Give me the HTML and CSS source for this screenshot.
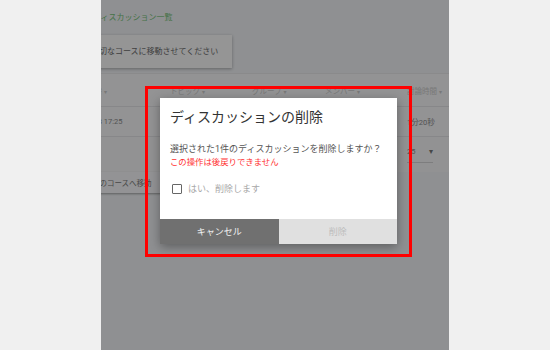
FILE: index.html
```html
<!DOCTYPE html>
<html>
<head>
	<meta charset="utf-8">
	<title>ディスカッション一覧</title>
	<link rel="stylesheet" href="styles.css">
</head>
<body>
	<div class="app">
		<div class="content">
			<h1 class="page-title">ディスカッション一覧</h1>
			<div class="notice">適切なコースに移動させてください</div>
			<div class="table">
				<div class="row head">
					<span>開始日時 <i class="caret">▾</i></span>
					<span>トピック <i class="caret">▾</i></span>
					<span>グループ <i class="caret">▾</i></span>
					<span>メンバー <i class="caret">▾</i></span>
					<span>討論時間 <i class="caret">▾</i></span>
				</div>
				<div class="row">
					<span>2018/06/08 17:25</span>
					<span>自己紹介</span>
					<span>グループA</span>
					<span>3名</span>
					<span>1分20秒</span>
				</div>
			</div>
			<div class="pager">
				<span class="pager-label">表示件数</span>
				<span class="select">25 <i class="caret">▾</i></span>
			</div>
			<button class="move">別のコースへ移動</button>
		</div>

		<div class="backdrop">
			<div class="dialog">
				<h2 class="dialog-title">ディスカッションの削除</h2>
				<div class="dialog-body">
					<p class="question">選択された1件のディスカッションを削除しますか？</p>
					<p class="warning">この操作は後戻りできません</p>
					<label class="confirm"><span class="box"></span>はい、削除します</label>
				</div>
				<div class="actions">
					<button class="btn cancel">キャンセル</button>
					<button class="btn delete" disabled>削除</button>
				</div>
			</div>
		</div>
	</div>
	<div class="annotation"></div>
</body>
</html>
```

FILE: styles.css
```css
body {
	margin: 0;
	background-color: #f0f0f0;
	font-family: "Roboto", "Noto Sans CJK JP", sans-serif;
}

.app {
	position: relative;
	width: 348px;
	height: 350px;
	margin: 0 auto;
	overflow: hidden;
	background-color: #eef0f3;
}

.content {
	margin-left: -61px;
	width: 409px;
}

.page-title {
	margin: 0;
	height: 35px;
	padding-left: 53px;
	line-height: 36px;
	font-size: 8px;
	font-weight: normal;
	color: #72bf76;
	box-sizing: border-box;
}

.notice {
	margin-left: 40px;
	width: 152px;
	height: 33px;
	padding-left: 11px;
	line-height: 33px;
	font-size: 8px;
	color: #6a6a6a;
	background-color: #f8f8f9;
	box-shadow: 0 1px 3px rgba(0, 0, 0, 0.3);
	box-sizing: border-box;
}

.table {
	margin-top: 5px;
	background-color: #f5f5f7;
}

.row {
	display: grid;
	grid-template-columns: 130px 82px 73px 82px 42px;
	height: 29px;
	align-items: center;
	font-size: 7.5px;
	color: #8a8a8a;
	border-bottom: 1px solid #e2e2e4;
}

.row span:first-child {
	padding-left: 22px;
}

.row.head {
	height: 32px;
	color: #c9c9c9;
	border-top: 1px solid #e6e6e8;
}

.row.head span:first-child {
	padding-left: 32px;
}

.caret {
	font-style: normal;
	font-family: "DejaVu Sans", sans-serif;
	font-size: 6px;
}

.pager {
	display: flex;
	justify-content: flex-end;
	align-items: flex-start;
	gap: 14px;
	height: 35px;
	padding-right: 16px;
	background-color: #f4f4f6;
	font-size: 7.5px;
	color: #8a8a8a;
}

.select {
	display: flex;
	justify-content: space-between;
	width: 26px;
	height: 16px;
	margin-top: 9px;
	line-height: 12px;
	border-bottom: 1px solid #d0d0d2;
}

.select .caret {
	font-size: 8px;
	color: #777;
}

.pager-label {
	margin-top: 9px;
	line-height: 12px;
}

.move {
	display: block;
	margin-left: 40px;
	width: 125px;
	height: 21px;
	padding: 0 0 0 12px;
	border: 0;
	text-align: left;
	font-family: "Roboto", "Noto Sans CJK JP", sans-serif;
	font-size: 7.5px;
	color: #777;
	background-color: #f6f6f8;
	box-shadow: 0 1px 2px rgba(0, 0, 0, 0.35);
}

.backdrop {
	position: absolute;
	top: 0;
	left: 0;
	right: 0;
	bottom: 0;
	background-color: rgba(0, 0, 0, 0.4);
}

.dialog {
	display: flex;
	flex-direction: column;
	width: 237px;
	height: 146px;
	margin: 98px 0 0 59px;
	background-color: white;
	box-shadow: 0 3px 10px rgba(0, 0, 0, 0.35);
}

.dialog-title {
	margin: 10px 10px 0;
	font-size: 14px;
	line-height: 18px;
	font-weight: normal;
	color: #333;
}

.dialog-body {
	padding: 17px 10px 0;
}

.dialog-body p {
	margin: 0;
	line-height: 13px;
}

.question {
	font-size: 9px;
	color: #555;
}

.warning {
	font-size: 8.4px;
	color: #ff3030;
}

.confirm {
	display: flex;
	align-items: center;
	gap: 6px;
	margin-top: 13px;
	padding-left: 2px;
	height: 13px;
	font-size: 9px;
	color: #a8a8a8;
}

.box {
	width: 10px;
	height: 10px;
	border: 1.5px solid #666;
	border-radius: 1px;
	box-sizing: border-box;
}

.actions {
	display: flex;
	margin-top: auto;
	height: 25px;
}

.btn {
	flex: 1;
	border: 0;
	font-family: "Roboto", "Noto Sans CJK JP", sans-serif;
	font-size: 9px;
}

.cancel {
	background-color: #707070;
	color: #f2f2f2;
}

.delete {
	background-color: #e0e0e0;
	color: #bdbdbd;
}

.annotation {
	position: absolute;
	left: 145px;
	top: 86px;
	width: 267px;
	height: 171px;
	border: 3px solid #ff0000;
	box-sizing: border-box;
}
```
